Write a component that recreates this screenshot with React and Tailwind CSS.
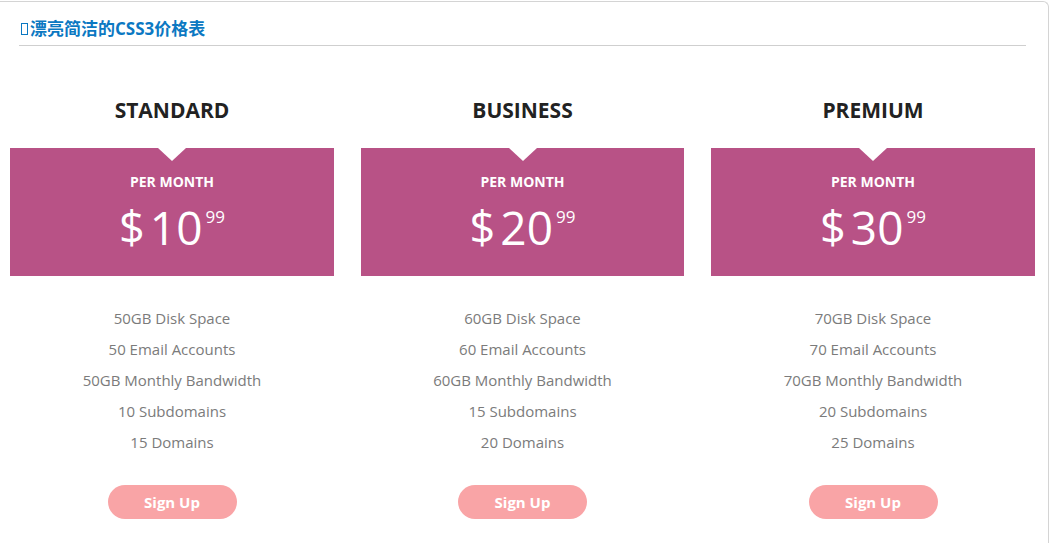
const plans = [
  {
    name: 'STANDARD',
    price: '10',
    features: ['50GB Disk Space', '50 Email Accounts', '50GB Monthly Bandwidth', '10 Subdomains', '15 Domains']
  },
  {
    name: 'BUSINESS',
    price: '20',
    features: ['60GB Disk Space', '60 Email Accounts', '60GB Monthly Bandwidth', '15 Subdomains', '20 Domains']
  },
  {
    name: 'PREMIUM',
    price: '30',
    features: ['70GB Disk Space', '70 Email Accounts', '70GB Monthly Bandwidth', '20 Subdomains', '25 Domains']
  }
];

export default function App() {
  return (
    <div className="w-[1056px] h-[543px] bg-white overflow-hidden font-['Open_Sans','Noto_Sans_CJK_SC',sans-serif]">
      <div className="mt-px w-[1049px] h-[560px] border-t border-r border-[#d4d4d4] rounded-tr-[6px]">
        {/* Title */}
        <div className="ml-[19px] w-[1007px] border-b border-[#cfcfcf] pt-[15px] pb-[4px]">
          <h2 className="flex items-center text-[17px] leading-6 font-bold text-[#0b78c2]">
            <span className="inline-block w-[7px] h-[12px] border border-[#0b78c2] mr-[2px] ml-[2px]"></span>
            漂亮简洁的CSS3价格表
          </h2>
        </div>

        {/* Pricing columns */}
        <div className="grid grid-cols-[324px_323px_324px] gap-x-[27px] pl-[10px]">
          {plans.map((plan) => (
            <div key={plan.name} className="flex flex-col items-center">
              <h3 className="mt-[49px] h-[30px] leading-[30px] text-[21px] font-bold text-[#222]">{plan.name}</h3>
              <div className="relative mt-[23px] w-full h-[128px] bg-[#b85286] text-white text-center">
                <div className="absolute left-1/2 top-0 -translate-x-1/2 w-0 h-0 border-l-[14px] border-r-[14px] border-t-[13px] border-l-transparent border-r-transparent border-t-white"></div>
                <p className="pt-[24px] text-[14px] leading-5 font-bold">PER MONTH</p>
                <div className="flex justify-center items-start mt-[7px] leading-none">
                  <span className="text-[45px] leading-[56px]">$</span>
                  <span className="ml-[5px] text-[46px] leading-[56px]">{plan.price}</span>
                  <span className="ml-[3px] mt-[8px] text-[17px] leading-5">99</span>
                </div>
              </div>
              <ul className="mt-[27px] text-[15px] leading-[31px] text-[#7b7b7b] text-center">
                {plan.features.map((f) => (
                  <li key={f}>{f}</li>
                ))}
              </ul>
              <button className="mt-[27px] w-[129px] h-[34px] rounded-full bg-[#f9a4a6] text-white text-[15px] font-bold">
                Sign Up
              </button>
            </div>
          ))}
        </div>
      </div>
    </div>
  );
}
